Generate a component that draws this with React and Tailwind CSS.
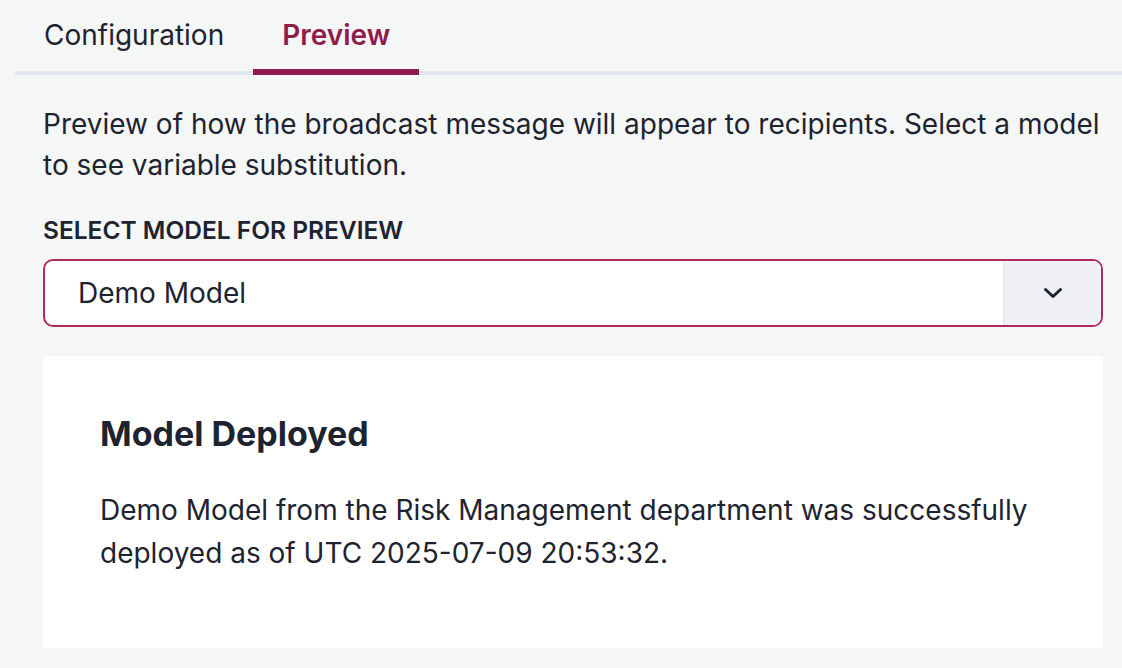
import React, { useState } from 'react';

const ChevronDown = () => (
  <svg width="20" height="12" viewBox="0 0 20 12" fill="none" stroke="currentColor" strokeWidth="3" strokeLinecap="round" strokeLinejoin="round">
    <path d="M2.5 2.5 L10 9.5 L17.5 2.5" />
  </svg>
);

const App = () => {
  const [tab, setTab] = useState('preview');

  return (
    <div className="min-h-screen bg-[#f5f6f6] text-[#1e2330] font-['Inter',sans-serif]">
      <div className="ml-[15px] flex border-b-4 border-[#e3e6ec]">
        <button
          className={`h-[75px] -mb-[4px] px-[29px] border-b-[6px] text-[28px] ${tab === 'config' ? 'border-[#8f1c4a] text-[#8f1c4a] font-semibold' : 'border-transparent'}`}
          onClick={() => setTab('config')}
        >
          Configuration
        </button>
        <button
          className={`h-[75px] -mb-[4px] px-[29px] border-b-[6px] text-[28px] ${tab === 'preview' ? 'border-[#8f1c4a] text-[#8f1c4a] font-semibold' : 'border-transparent'}`}
          onClick={() => setTab('preview')}
        >
          Preview
        </button>
      </div>

      <div className="px-[43px] pr-[19px]">
        <p className="mt-[29px] text-[28px] leading-[41px]">
          Preview of how the broadcast message will appear to recipients. Select a model to see variable substitution.
        </p>

        <div className="mt-[28px] text-[24.5px] leading-[32px] font-semibold uppercase">
          Select model for preview
        </div>

        <div className="mt-[13px] flex h-[68px] border-2 border-[#b02a5e] rounded-[10px] bg-white overflow-hidden">
          <div className="flex-1 flex items-center pl-[33px] text-[28px]">Demo Model</div>
          <div className="w-[98px] flex items-center justify-center bg-[#eef0f4] border-l border-[#e2e4ea]">
            <ChevronDown />
          </div>
        </div>

        <div className="mt-[29px] h-[292px] bg-white px-[57px] pt-[58px]">
          <h2 className="text-[34px] leading-[40px] font-bold">Model Deployed</h2>
          <p className="mt-[35px] text-[28px] leading-[43px]">
            Demo Model from the Risk Management department was successfully deployed as of UTC 2025-07-09 20:53:32.
          </p>
        </div>
      </div>
    </div>
  );
};

export default App;
